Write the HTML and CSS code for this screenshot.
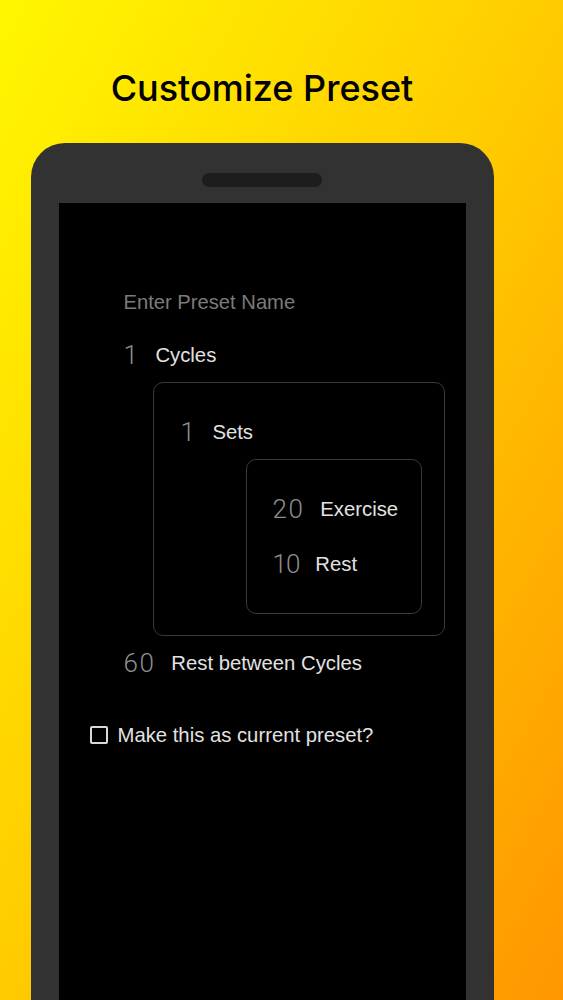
FILE: index.html
```html
<!DOCTYPE html>
<html>
<head>
<meta charset="utf-8">
<link rel="stylesheet" href="styles.css">
</head>
<body>
<div class="page">
  <h1 class="title">Customize Preset</h1>
  <div class="phone">
    <div class="speaker"></div>
    <div class="screen">
      <div class="form">
        <div class="placeholder">Enter Preset Name</div>
        <div class="row row-cycles"><span class="num">1</span><span class="label">Cycles</span></div>
        <div class="box box-outer">
          <div class="row"><span class="num">1</span><span class="label">Sets</span></div>
          <div class="box box-inner">
            <div class="row"><span class="num">20</span><span class="label">Exercise</span></div>
            <div class="row row-rest"><span class="num num-narrow">10</span><span class="label">Rest</span></div>
          </div>
        </div>
        <div class="row row-between"><span class="num">60</span><span class="label">Rest between Cycles</span></div>
      </div>
      <div class="check-row"><span class="checkbox"></span><span class="check-label">Make this as current preset?</span></div>
    </div>
  </div>
</div>
</body>
</html>
```

FILE: styles.css
```css
html, body {
  margin: 0;
  padding: 0;
}
.page {
  width: 563px;
  height: 1000px;
  box-sizing: border-box;
  padding-right: 39px;
  overflow: hidden;
  display: flex;
  flex-direction: column;
  align-items: center;
  background: linear-gradient(to bottom right, #fff700 0%, #ffcb00 50%, #ff9600 100%);
}
.title {
  margin: 0;
  padding-top: 66px;
  font-family: Inter, "Noto Sans", sans-serif;
  font-weight: 500;
  font-size: 36px;
  line-height: 44px;
  color: #000;
}
.phone {
  margin-top: 33px;
  width: 463px;
  flex: 1;
  box-sizing: border-box;
  background: #323232;
  border-radius: 34px 34px 0 0;
  padding: 30px 28px 0;
  display: flex;
  flex-direction: column;
  align-items: center;
}
.speaker {
  width: 120px;
  height: 14px;
  border-radius: 7px;
  background: #1d1d1e;
  margin-bottom: 16px;
}
.screen {
  align-self: stretch;
  flex: 1;
  background: #000;
  padding: 87px 0 0 31px;
  font-family: "Liberation Sans", Arial, sans-serif;
}
.form {
  padding-left: 34px;
  display: flex;
  flex-direction: column;
  align-items: flex-start;
}
.placeholder {
  font-size: 20.2px;
  line-height: 24px;
  color: #7b7b7b;
}
.row {
  display: flex;
  align-items: center;
  gap: 16px;
  height: 24px;
}
.num {
  font-family: Roboto, "Liberation Sans", sans-serif;
  font-weight: 300;
  font-size: 26px;
  letter-spacing: 1.5px;
  color: #8e8e8e;
}
.num-narrow {
  letter-spacing: -1px;
}
.label {
  font-size: 20.3px;
  color: #e2e2e2;
}
.row-cycles {
  margin-top: 29px;
}
.box {
  border: 1px solid #3a3a3a;
  border-radius: 10px;
  display: flex;
  flex-direction: column;
  box-sizing: border-box;
}
.box-outer {
  margin-top: 15px;
  margin-left: 29px;
  width: 292px;
  padding: 37px 22px 21px 27px;
}
.box-inner {
  margin-top: 15px;
  align-self: flex-end;
  width: 176px;
  padding: 37px 10px 37px 26px;
}
.row-rest {
  margin-top: 31px;
}
.row-between {
  margin-top: 15px;
}
.check-row {
  margin-top: 48px;
  display: flex;
  align-items: center;
  gap: 10px;
  height: 24px;
}
.checkbox {
  width: 18px;
  height: 18px;
  box-sizing: border-box;
  border: 2px solid #d8d8d8;
  border-radius: 2px;
}
.check-label {
  font-size: 20.3px;
  color: #e2e2e2;
}
```
